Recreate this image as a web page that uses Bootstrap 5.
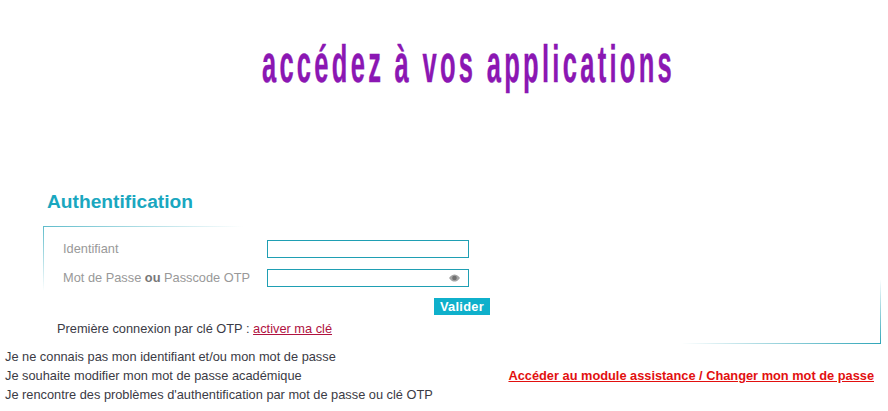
<!DOCTYPE html>
<html lang="fr">
<head>
<meta charset="utf-8">
<title>Authentification</title>
<link href="https://cdn.jsdelivr.net/npm/bootstrap@5.3.0/dist/css/bootstrap.min.css" rel="stylesheet">
<style>
html,body{height:411px;overflow:hidden}
body{background:#fff;font-family:"Liberation Sans",Arial,sans-serif;font-size:12.8px;color:#3b3b45}
.hero{height:183px;padding-top:37px}
.hero-title{margin:0;padding-left:49px;font-family:"Liberation Sans",sans-serif;font-weight:700;font-size:51px;line-height:56px;color:#8b17b3;letter-spacing:6.6px;white-space:nowrap;text-align:center;transform:scaleX(.5);transform-origin:468.5px 0;-webkit-text-stroke:.4px #8b17b3}
.auth-title{margin:0 0 0 47px;height:43px;padding-top:8px;font-size:19.2px;line-height:22px;font-weight:700;color:#1aa7bf}
.auth-box{margin-left:43px;width:838px;height:118px;padding:8px 0 0 20px;
background:
linear-gradient(90deg,#5fbccb,#fff) 0 0/200px 1px no-repeat,
linear-gradient(180deg,#5fbccb,#fff) 0 0/1px 65px no-repeat,
linear-gradient(90deg,#fff,#2fa5b8) right bottom/200px 1px no-repeat,
linear-gradient(0deg,#2fa5b8,#fff) right bottom/1px 65px no-repeat}
.lbl{width:204px;color:#999;line-height:18px;white-space:nowrap}
.lbl b{color:#777}
.field{width:202px;height:18px;border:1px solid #1f9fb3;padding:0 14px 0 3px;font-size:12px;outline:0;background:#fff}
.field-wrap{width:202px}
.eye{position:absolute;right:9px;top:5px}
.frow{height:29px}
.btn-row{width:427px;margin-top:6px}
.valider{background:#0fb0cb;color:#fff;font-weight:700;font-size:12.8px;line-height:17px;height:17px;width:56px;border:0;border-radius:0;padding:0;letter-spacing:.3px}
.first-line{margin:6px 0 0 -6px;line-height:16px;color:#3b3b45}
.first-line a{color:#b0123f}
.help{margin-top:3px;padding:0 14px 0 5px;line-height:19px}
.help-link{color:#e2100f;font-weight:700}
</style>
</head>
<body>
<div class="hero"><h1 class="hero-title">accédez à vos applications</h1></div>
<h2 class="auth-title">Authentification</h2>
<form class="auth-box">
  <div class="d-flex align-items-center frow"><label class="lbl" for="u">Identifiant</label><input class="field" id="u" type="text"></div>
  <div class="d-flex align-items-center frow"><label class="lbl" for="p">Mot de Passe <b>ou</b> Passcode OTP</label>
    <div class="position-relative field-wrap d-flex"><input class="field" id="p" type="text">
      <svg class="eye" width="11" height="8" viewBox="0 0 11 8"><path d="M0 4C2 1 4 .5 5.500 .5S9 1 11 4C9 7 7 7.500 5.500 7.500S2 7 0 4Z" fill="#a5a5a5"/><circle cx="5.500" cy="4" r="2.300" fill="#707070"/></svg>
    </div></div>
  <div class="d-flex justify-content-end btn-row"><button type="button" class="btn valider">Valider</button></div>
  <p class="first-line">Première connexion par clé OTP : <a href="#">activer ma clé</a></p>
</form>
<div class="help d-flex justify-content-between align-items-center">
  <div><div>Je ne connais pas mon identifiant et/ou mon mot de passe</div><div>Je souhaite modifier mon mot de passe académique</div><div>Je rencontre des problèmes d'authentification par mot de passe ou clé OTP</div></div>
  <a class="help-link" href="#">Accéder au module assistance / Changer mon mot de passe</a>
</div>
<script src="https://cdn.jsdelivr.net/npm/bootstrap@5.3.0/dist/js/bootstrap.bundle.min.js"></script>
</body>
</html>
